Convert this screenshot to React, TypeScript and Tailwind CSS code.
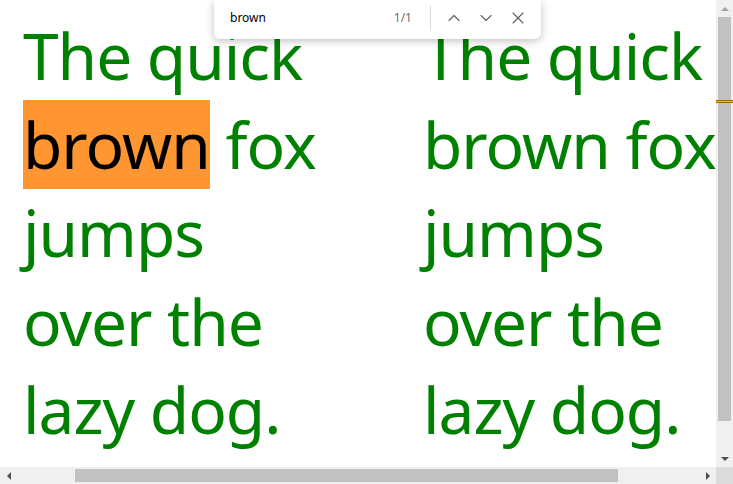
import { ChevronUp, ChevronDown, X } from 'lucide-react'

const lines = ['The quick', 'brown fox', 'jumps', 'over the', 'lazy dog.']

function Column({ highlight }: { highlight?: boolean }) {
  return (
    <div className="text-[64px] leading-[88.6px] tracking-[-1px] text-[#008000] whitespace-nowrap">
      {lines.map((l, i) =>
        highlight && i === 1 ? (
          <div key={i}>
            <span className="bg-[#ff9632] text-black pt-[1px] pb-[1px]">brown</span> fox
          </div>
        ) : (
          <div key={i}>{l}</div>
        )
      )}
    </div>
  )
}

export default function App() {
  return (
    <div className="relative w-[733px] h-[484px] overflow-hidden bg-white font-['Noto_Sans',sans-serif]">
      <div className="flex h-[467px]">
        <div className="flex-1 overflow-hidden">
          <div className="grid grid-cols-[400px_400px] pl-[23px] pt-[12px]">
            <Column highlight />
            <Column />
          </div>
        </div>
        {/* vertical scrollbar */}
        <div className="relative w-[17px] bg-[#f0f0f0] flex flex-col items-center">
          <div className="h-[17px] flex items-center justify-center">
            <div className="w-0 h-0 border-l-[4px] border-r-[4px] border-b-[4px] border-l-transparent border-r-transparent border-b-[#a3a3a3]" />
          </div>
          <div className="w-[13px] h-[404px] bg-[#c1c1c1]" />
          <div className="flex-1" />
          <div className="h-[17px] flex items-center justify-center">
            <div className="w-0 h-0 border-l-[4px] border-r-[4px] border-t-[4px] border-l-transparent border-r-transparent border-t-[#505050]" />
          </div>
          <div className="absolute left-0 top-[100px] w-[17px] h-[3px] bg-[#f0c000] border-y border-[#9a6a00]" />
        </div>
      </div>
      {/* horizontal scrollbar */}
      <div className="flex h-[17px]">
        <div className="flex-1 bg-[#f0f0f0] flex items-center">
          <div className="w-[17px] flex items-center justify-center">
            <div className="w-0 h-0 border-t-[4px] border-b-[4px] border-r-[4px] border-t-transparent border-b-transparent border-r-[#505050]" />
          </div>
          <div className="ml-[58px] w-[543px] h-[13px] bg-[#c1c1c1]" />
          <div className="flex-1" />
          <div className="w-[17px] flex items-center justify-center">
            <div className="w-0 h-0 border-t-[4px] border-b-[4px] border-l-[4px] border-t-transparent border-b-transparent border-l-[#505050]" />
          </div>
        </div>
        <div className="w-[17px] bg-[#dcdcdc]" />
      </div>
      {/* find bar */}
      <div className="absolute left-[214px] top-0 w-[327px] h-[39px] bg-white rounded-b-[6px] shadow-[0_2px_8px_rgba(0,0,0,0.25)] flex items-center text-[12px] text-black">
        <div className="flex-1 pl-[16px] pb-[3px]">brown</div>
        <div className="text-[#6d6d6d] pr-[18px] pb-[3px]">1/1</div>
        <div className="w-px h-[26px] mb-[3px] bg-[#dcdcdc]" />
        <div className="flex items-center gap-[12px] px-[13px] pb-[3px] text-[#5f5f5f]">
          <ChevronUp size={20} strokeWidth={1.3} />
          <ChevronDown size={20} strokeWidth={1.3} />
          <X size={20} strokeWidth={1.3} />
        </div>
      </div>
    </div>
  )
}
